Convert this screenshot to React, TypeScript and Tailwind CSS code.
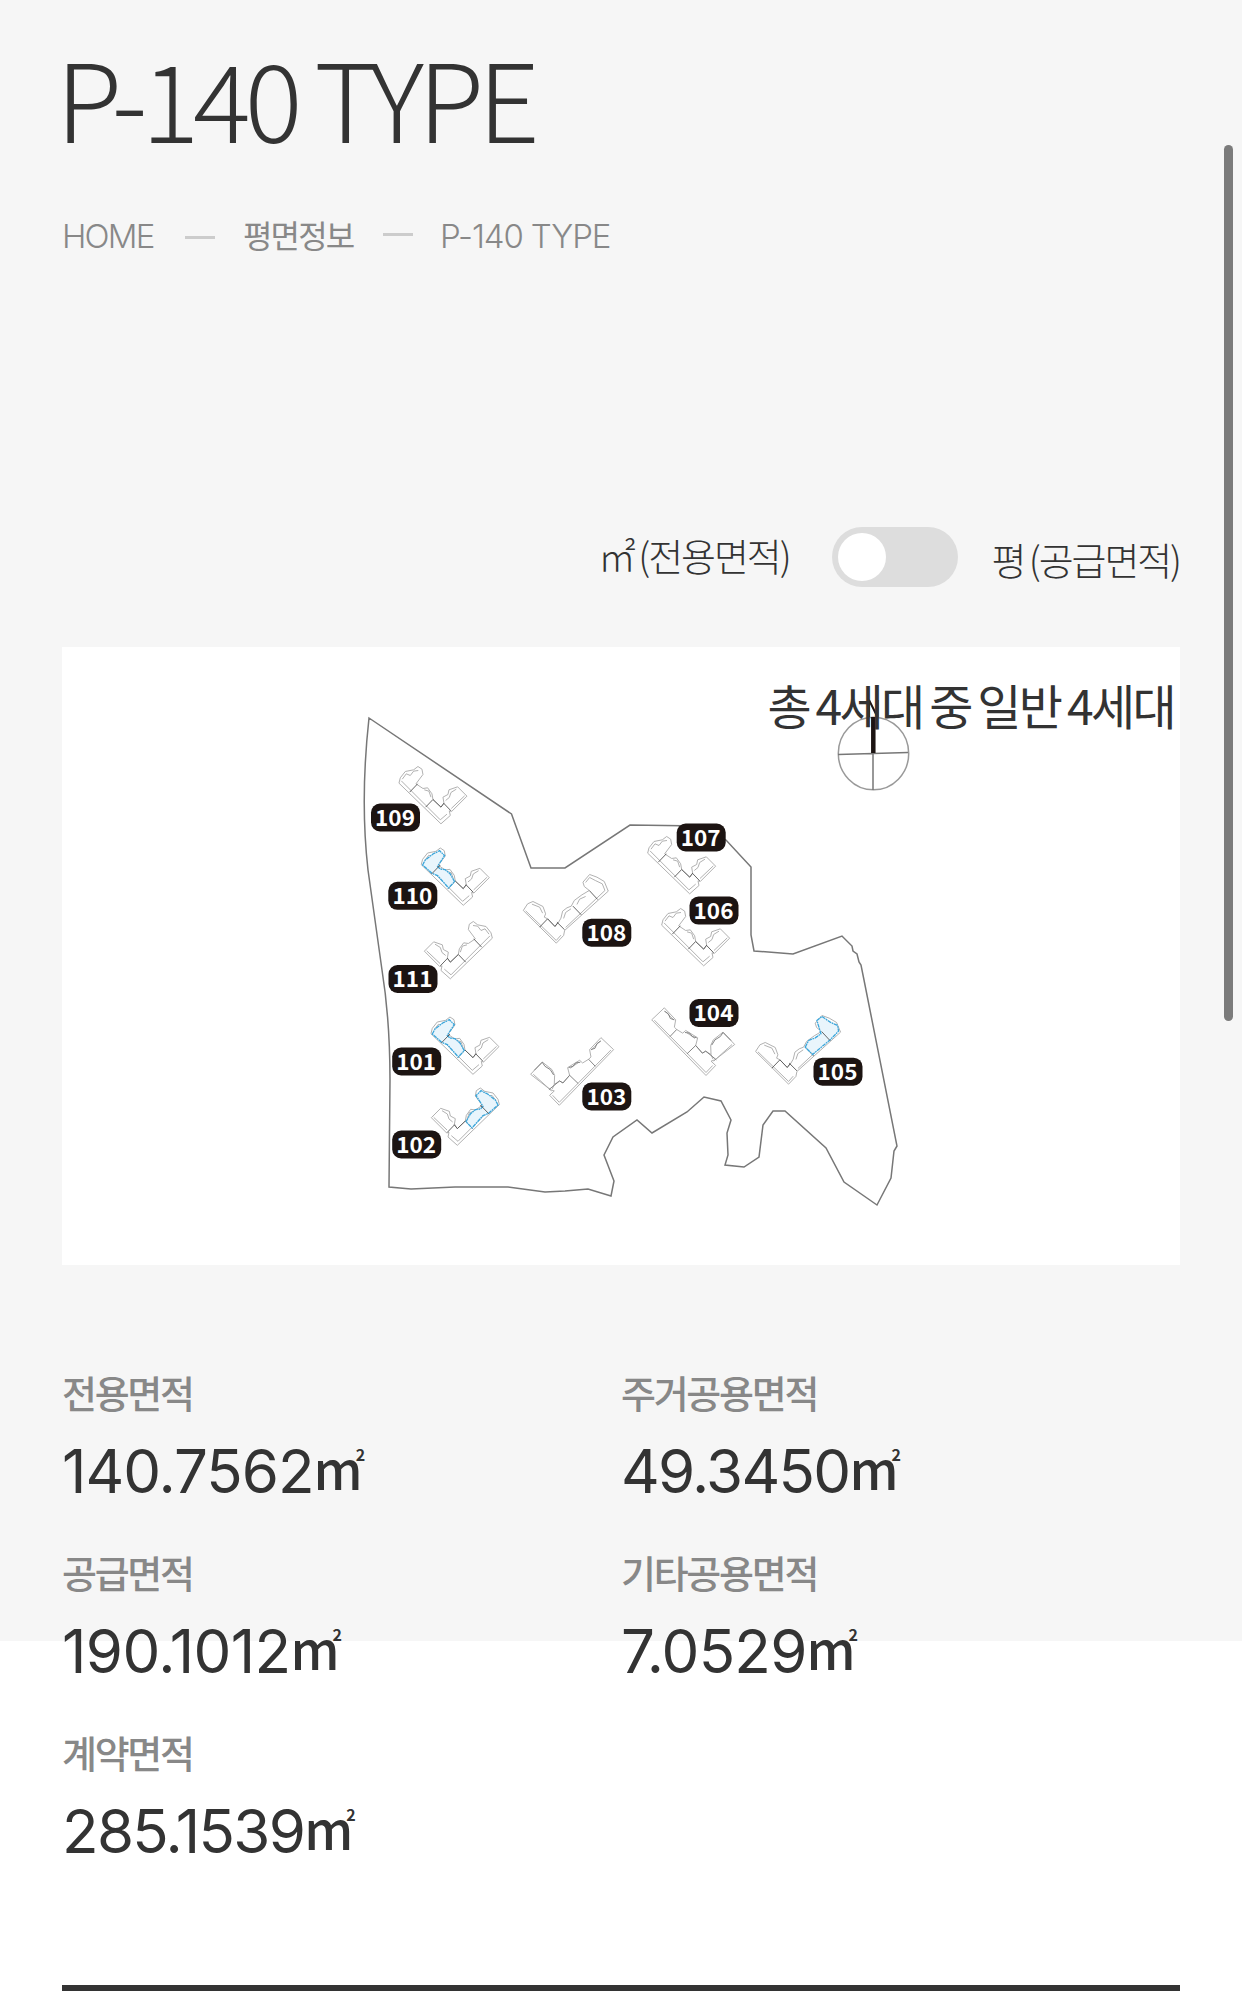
const crumbs = ["HOME", "평면정보", "P-140 TYPE"];

const areas = [
  { label: "전용면적", value: "140.7562", tracking: "tracking-[-1px]" },
  { label: "주거공용면적", value: "49.3450", tracking: "tracking-[-1.7px]" },
  { label: "공급면적", value: "190.1012", tracking: "tracking-[-0.6px]" },
  { label: "기타공용면적", value: "7.0529", tracking: "tracking-[-0.8px]" },
  { label: "계약면적", value: "285.1539", tracking: "tracking-[-1.7px]" },
];

const badges = [
  { no: "109", x: 395.5, y: 817.5 },
  { no: "110", x: 412.8, y: 895.8 },
  { no: "111", x: 413, y: 979 },
  { no: "101", x: 416.7, y: 1061.5 },
  { no: "102", x: 416.7, y: 1144.5 },
  { no: "108", x: 606.8, y: 932.7 },
  { no: "103", x: 606.8, y: 1096.5 },
  { no: "107", x: 701.2, y: 837.5 },
  { no: "106", x: 714, y: 910.6 },
  { no: "104", x: 714, y: 1013 },
  { no: "105", x: 838, y: 1071.7 },
];

// L-shaped block with two units on the long wing
function BlockL({ transform, active }: { transform: string; active?: boolean }) {
  return (
    <g transform={transform} fill="none" stroke="#a8a8a8" strokeWidth="2.7">
      <path d="M146 248L150 232L165 213L190 208L203 198L215 206L218 222L197 250L218 264L232 262L245 280L248 297L272 320L281 308L278 290L293 282L296 268L322 259L350 287L304 333L297 331L300 345L272 370Z" />
      <path d="M153 241L270 358L290 341M156 236L168 220L180 225L190 212L204 210M222 268L236 272L242 290M286 300L297 291L302 276L318 266M343 286L303 324" />
      <path d="M202 250L178 275M248 297L226 320M280 308L302 331M248 297L272 320L281 308" stroke="#555" />
      {active && (
        <path
          d="M150 249L158 234L181 216L201 206L216 221L195 253L203 261L218 263L233 276L246 299L228 318L195 281L178 274Z"
          fill="#e9f5fc"
          stroke="#3ba6db"
          strokeWidth="4"
          strokeDasharray="12 2 5 2"
        />
      )}
      {active && <path d="M202 250L178 275" stroke="#555" />}
    </g>
  );
}

// block with three units on the long wing
function BlockLong({ transform, active }: { transform: string; active?: boolean }) {
  return (
    <g transform={transform} fill="none" stroke="#a8a8a8" strokeWidth="2.7">
      <path d="M519 630L532 610L548 603L578 618L586 640L582 650L592 655L614 678L625 665L632 653L637 632L650 622L663 617L672 600L695 583L717 570L702 558L698 545L718 522L740 530L762 543L774 572L643 690L640 705L618 728Z" />
      <path d="M526 631L618 720L632 704M545 611L568 620L577 638M640 654L646 636L662 625M680 612L688 596L706 588M706 546L718 531L735 540L756 550L764 570L646 681" />
      <path d="M592 655L568 680M592 655L614 678L623 666M620 665L643 688M668 617L693 643M717 570L742 597" stroke="#555" />
      {active && (
        <path
          d="M668 617L678 597L698 589L715 577L703 537L718 525L743 542L765 552L768 569L743 595L690 639Z"
          fill="#e9f5fc"
          stroke="#3ba6db"
          strokeWidth="4"
          strokeDasharray="12 2 5 2"
        />
      )}
      {active && <path d="M717 570L742 597" stroke="#555" />}
    </g>
  );
}

// straight wings, no rounded bays
function BlockWide({ transform }: { transform: string }) {
  return (
    <g transform={transform} fill="none" stroke="#a8a8a8" strokeWidth="2.7">
      <path d="M541 342L576 305L605 328L613 345L612 372L628 362L638 368L658 345L652 322L688 300L697 308L715 297L722 290L718 268L752 232L790 268L627 435L598 405L612 392L600 388Z" />
      <path d="M549 342L604 392M607 405L627 426L782 269M660 324L684 307M724 268L750 242M612 372L606 386" />
      <path
        d="M552 330L576 306L584 318L600 328L610 344M596 388L628 362L638 368L658 345L684 370M715 297L735 318M655 322L668 318L676 308L690 306M722 268L734 264L740 250L752 242"
        stroke="#777"
      />
    </g>
  );
}

function SiteMap() {
  return (
    <svg viewBox="62 647 1118 618" className="block h-full w-full">
      <path
        d="M369 718L511.500 814L531 868H565L630 825L700 826L726 840L751 867V935L754 951L793 954L842 936L852 946L853 951L857 954L859 962L861 965L864 980L897 1146L894 1151L891 1178L877 1205L844 1182L826 1148L785 1111H773L763 1125L759 1157L744 1167L725 1165L728 1155L727 1133L731 1120L721 1101L704 1097L687 1112L652 1133L637 1120L613 1137L604 1155L614 1181L611 1196L588 1189L565 1191L545 1192L508 1187H455L411 1189L389 1187L390 1080Q390 1020 382 970L368 870Q360 800 369 718Z"
        fill="none"
        stroke="#777"
        strokeWidth="1.500"
      />

      <BlockL transform="translate(350.300 700.500) scale(.3333)" />
      <BlockL transform="translate(372.600 782) scale(.3333)" active />
      <BlockL transform="translate(541 855.500) scale(-.3333 .3333)" />
      <BlockL transform="translate(382.300 951) scale(.3333)" active />
      <BlockL transform="translate(548 1022) scale(-.3333 .3333)" active />
      <BlockL transform="translate(599 770.500) scale(.3333)" />
      <BlockL transform="translate(613 842.500) scale(.3333)" />
      <BlockLong transform="translate(350.300 700.500) scale(.3333)" />
      <BlockLong transform="translate(582.600 841.500) scale(.3333)" active />
      <BlockWide transform="translate(350.300 960.300) scale(.3333)" />
      <BlockWide transform="translate(915 930.500) scale(-.3333 .3333)" />

      {badges.map((b) => (
        <g key={b.no}>
          <rect x={b.x - 24.5} y={b.y - 14} width="49" height="28" rx="9" fill="#1c1412" />
          <text
            x={b.x - 0.5}
            y={b.y + 8}
            textAnchor="middle"
            fill="#fff"
            fontFamily="'Noto Sans CJK KR', sans-serif"
            fontWeight="700"
            fontSize="22.500"
          >
            {b.no}
          </text>
        </g>
      ))}

      {/* compass */}
      <g fill="none" stroke="#777" strokeWidth="1.500">
        <ellipse cx="873.500" cy="753.500" rx="35.200" ry="36.300" stroke="#999" />
        <path d="M838 754.500L908 752.500M873 753V790" />
        <path d="M873.300 717V753" stroke="#1c1412" strokeWidth="4.500" />
        <path d="M869 717V700L877.500 717V700" stroke="#1c1412" strokeWidth="2" />
      </g>
    </svg>
  );
}

export default function App() {
  return (
    <div className="relative h-[2008px] w-[1242px] overflow-hidden bg-[linear-gradient(#f6f6f6_1641px,#fff_1641px)] px-[62px] font-['Noto_Sans_CJK_KR',sans-serif] text-[#333]">
      <h1 className="-ml-1.5 pt-[42px] text-[108px] leading-[108px] font-light tracking-[-0.0565em] whitespace-nowrap">
        P-140 TYPE
      </h1>

      <nav className="mt-[66px] flex h-10 items-center text-[32px] leading-10 whitespace-nowrap text-[#888]">
        <span className="w-[123px] font-['Inter'] text-[33px] font-light tracking-[-0.055em]">{crumbs[0]}</span>
        <div className="mt-[3px] mr-7 h-[3px] w-[30px] bg-[#ccc]" />
        <span className="w-[140px] pb-[5px] tracking-[-0.058em]">{crumbs[1]}</span>
        <div className="-mt-[3px] mr-[27px] h-[3px] w-[30px] bg-[#ccc]" />
        <span className="font-['Inter'] text-[33px] font-light tracking-[-0.034em]">{crumbs[2]}</span>
      </nav>

      <div className="mt-[271px] flex h-[60px] items-center justify-end text-[38px] leading-[60px] font-light tracking-[-0.055em] whitespace-nowrap [word-spacing:-2px]">
        <span className="pb-1">㎡ (전용면적)</span>
        <div className="mr-[34px] ml-[42px] flex h-[60px] w-[126px] items-center rounded-full bg-[#ddd] px-1.5">
          <div className="size-12 rounded-full bg-white" />
        </div>
        <span className="pt-1">평 (공급면적)</span>
      </div>

      <section className="relative mt-[60px] h-[618px] bg-white">
        <SiteMap />
        <p className="absolute top-[25px] right-[6px] text-[48px] leading-[64px] tracking-[-0.055em] whitespace-nowrap [word-spacing:-1.5px]">
          총 4세대 중 일반 4세대
        </p>
      </section>

      <dl className="mt-[97px] grid grid-cols-2">
        {areas.map((a) => (
          <div key={a.label} className="h-[180px] whitespace-nowrap">
            <dt className="text-[38px] leading-[60px] font-medium tracking-[-0.06em] text-[#888]">{a.label}</dt>
            <dd className="flex h-[98px] items-center leading-[92px]">
              <span className={`font-['Inter'] text-[60px] ${a.tracking}`}>{a.value}</span>
              <span className="pb-[6px] text-[52px] font-medium tracking-[-7px]">m</span>
              <span className="pb-[34px] text-[16px] leading-4 font-bold">2</span>
            </dd>
          </div>
        ))}
      </dl>

      <div className="mt-[83px] h-1.5 bg-[#333]" />

      {/* scroll thumb */}
      <div className="absolute top-[145px] right-[9px] h-[876px] w-[9px] rounded-full bg-[#7b7b7b]" />
    </div>
  );
}
